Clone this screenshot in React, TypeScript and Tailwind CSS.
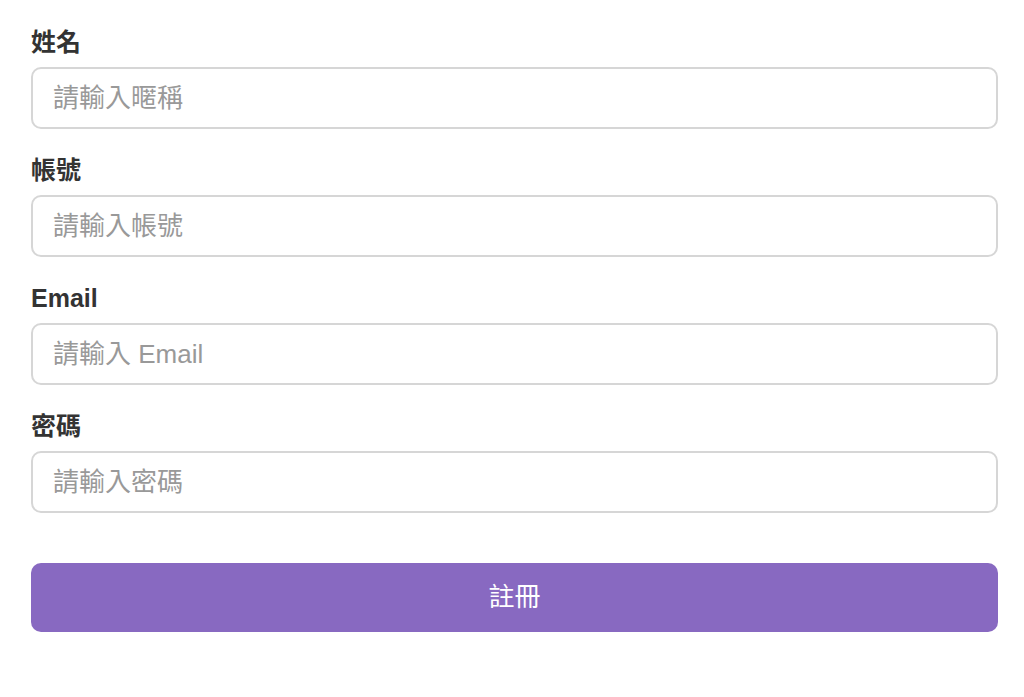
import React from 'react';

const fields = [
  { label: '姓名', placeholder: '請輸入暱稱', type: 'text' },
  { label: '帳號', placeholder: '請輸入帳號', type: 'text' },
  { label: 'Email', placeholder: '請輸入 Email', type: 'email' },
  { label: '密碼', placeholder: '請輸入密碼', type: 'password' },
];

export default function App() {
  return (
    <div
      className="min-h-[697px] bg-white pl-[31px] pr-[26px] pt-[24px]"
      style={{ fontFamily: '"Liberation Sans", "Noto Sans CJK TC", sans-serif' }}
    >
      <form className="flex flex-col" onSubmit={(e) => e.preventDefault()}>
        {fields.map((f) => (
          <div key={f.label} className="mb-[23px] flex flex-col">
            <label className="mb-[7px] h-[36px] text-[25px] leading-[36px] font-semibold text-[#333]">{f.label}</label>
            <input
              type={f.type}
              placeholder={f.placeholder}
              className="h-[62px] w-full rounded-[10px] border-2 border-[#d6d6d6] bg-white px-[20px] text-[26px] text-[#333] outline-none placeholder:text-[#999]"
            />
          </div>
        ))}
        <button
          type="submit"
          className="mt-[27px] h-[69px] w-full rounded-[10px] bg-[#8869c1] text-[26px] text-white"
        >
          註冊
        </button>
      </form>
    </div>
  );
}
